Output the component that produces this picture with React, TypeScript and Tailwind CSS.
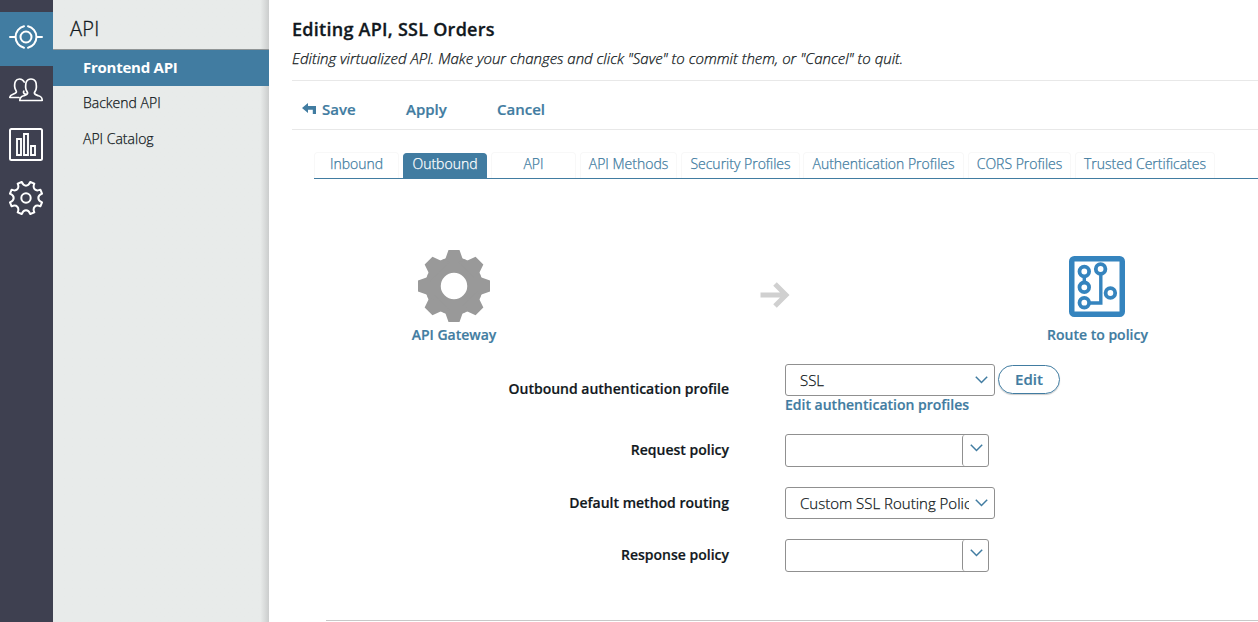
import React from "react";

const BLUE = "#417ca1";

function TargetIcon() {
  return (
    <svg width="34" height="24" viewBox="0 0 34 24" fill="none" stroke="#fff" strokeWidth="2" strokeLinecap="round">
      <circle cx="17" cy="12" r="5.500" />
      <path d="M19 1.300a11 11 0 0 1 0 21.400M15 22.700a11 11 0 0 1 0-21.400M1 12h5M28 12h5" />
    </svg>
  );
}

function UsersIcon() {
  return (
    <svg width="34" height="24" viewBox="0 0 34 24" fill="none" stroke="#fff" strokeWidth="1.7" strokeLinejoin="round" strokeLinecap="round">
      <path d="M10.8 22.500c0-3.200 1.200-4 3.800-4.700 2.600-.9 4-1.300 4-2.800 0-1.200-1.700-2.200-1.900-5C16.300 4.500 17.500 1 22 1s5.700 3.500 5.300 9c-.2 2.800-1.900 3.800-1.900 5 0 1.500 1.400 1.900 4 2.800 2.600.8 3.800 1.500 3.800 4.700z" />
      <path d="M15.200 4C14.300 2 12.700 1 10.500 1 6.500 1 5.300 4.500 5.700 8.800c.2 2.700 1.700 3.700 1.700 5 0 1.200-1.400 1.700-3.400 2.400-2.200.8-3.200 1.200-3.200 3.300h9.200M14.800 13.200c-.9 1.900.5 2.600 1.700 3.100" />
    </svg>
  );
}

function ChartIcon() {
  return (
    <svg width="34" height="33" viewBox="0 0 34 33" fill="none" stroke="#fff" strokeWidth="2">
      <rect x="1" y="1" width="32" height="31" rx="1.500" />
      <path strokeWidth="1.900" d="M8 11h4v16H8zM15 6h4v21h-4zM22 18h4v9h-4z" />
    </svg>
  );
}

function polar(radius: number, degrees: number) {
  const t = (degrees * Math.PI) / 180;
  return `${(17 + radius * Math.cos(t)).toFixed(2)} ${(17 + radius * Math.sin(t)).toFixed(2)}`;
}

function cogOutline() {
  let d = `M${polar(16.6, 15)}`;
  for (let i = 0; i < 8; i++) {
    const a = 22.5 + i * 45;
    d += `L${polar(16.6, a + 7.5)}C${polar(11.3, a + 11)} ${polar(11.3, a + 34)} ${polar(16.6, a + 37.5)}`;
  }
  return d + "Z";
}

function SettingsIcon() {
  return (
    <svg width="34" height="34" viewBox="0 0 34 34" fill="none" stroke="#fff" strokeWidth="2" strokeLinejoin="round">
      <circle cx="17" cy="17" r="4.700" />
      <path d={cogOutline()} />
    </svg>
  );
}

function GatewayIcon() {
  const teeth = [0, 45, 90, 135, 180, 225, 270, 315];
  return (
    <svg width="72" height="72" viewBox="0 0 72 72">
      <circle cx="36" cy="36" r="21" fill="none" stroke="#999" strokeWidth="15.500" />
      {teeth.map((a) => (
        <path key={a} d="M30.500 0h11l3 8.500L50 16H22l5.500-7.500z" fill="#999" transform={`rotate(${a} 36 36)`} />
      ))}
    </svg>
  );
}

function PolicyIcon() {
  return (
    <svg width="56" height="61" viewBox="0 0 56 61" fill="none" stroke="#3584be">
      <rect x="2.750" y="2.750" width="50.500" height="55.500" rx="2.500" strokeWidth="5.500" />
      <g strokeWidth="3.800">
        <circle cx="15.300" cy="15.500" r="4.800" />
        <circle cx="15.300" cy="31.300" r="4.800" />
        <circle cx="15.300" cy="46.700" r="4.800" />
        <circle cx="31.600" cy="13" r="4.800" />
        <circle cx="41.400" cy="37" r="4.800" />
      </g>
      <path strokeWidth="3.400" d="M15.300 20v7.500M20 47h11.800V18" />
    </svg>
  );
}

function Chevron() {
  return (
    <svg className="shrink-0" width="13" height="8" viewBox="0 0 13 8" fill="none" stroke={BLUE} strokeWidth="1.500">
      <path d="M.8.8 6.500 6.500 12.200.8" />
    </svg>
  );
}

function Select({ value }: { value: string }) {
  return (
    <div className="flex h-8 w-[210px] items-center rounded-[3px] border border-[#909090] bg-white pr-[6px] pl-[14px] text-[15px] font-light [-webkit-text-stroke:0.25px]">
      <span className="w-[169px] overflow-hidden whitespace-nowrap">{value}</span>
      <span className="ml-auto"><Chevron /></span>
    </div>
  );
}

function Combo() {
  return (
    <div className="flex h-[33px] w-[204px] rounded-[3px] border border-[#909090] bg-white">
      <div className="flex-1" />
      <div className="flex w-[26px] justify-end rounded-[3px] border-l border-[#909090] pt-[9px] pr-[5px]"><Chevron /></div>
    </div>
  );
}

function Label({ children }: { children: string }) {
  return <div className="w-[460px] text-right text-[14px] leading-5 font-semibold [-webkit-text-stroke:0.2px]">{children}</div>;
}

const tabs = [
  { name: "Inbound", box: "ml-0 w-[85px]" },
  { name: "Outbound", box: "ml-[4px] w-[84px]" },
  { name: "API", box: "ml-[4px] w-[85px]" },
  { name: "API Methods", box: "ml-[4px] w-[97px]" },
  { name: "Security Profiles", box: "ml-[4px] w-[119px]" },
  { name: "Authentication Profiles", box: "ml-[3px] w-[161px]" },
  { name: "CORS Profiles", box: "ml-[4px] w-[103px]" },
  { name: "Trusted Certificates", box: "ml-[4px] w-[140px]" },
];

export default function App() {
  return (
    <div className="flex h-[622px] w-[1258px] overflow-hidden bg-white font-['Open_Sans','Liberation_Sans',sans-serif] text-[#111820]">
      <nav className="flex w-[53px] shrink-0 flex-col items-center bg-[#3e4050] pt-3 pr-px">
        <div className="-mr-px flex h-[54px] w-[53px] items-center justify-center bg-[#417ca1] pr-px pb-1"><TargetIcon /></div>
        <div className="mt-[12px] h-6"><UsersIcon /></div>
        <div className="mt-[26px] h-[33px]"><ChartIcon /></div>
        <div className="mt-[20px]"><SettingsIcon /></div>
      </nav>

      <aside className="w-[216px] shrink-0 bg-gradient-to-r from-[#e8ebea] from-96% to-[#cbcdcd] text-[14px]">
        <div className="flex h-[50px] items-center border-b border-[#909596] pt-[9px] pl-[17px] text-[20px] font-light tracking-[0.3px] [-webkit-text-stroke:0.3px]">API</div>
        <div className="flex h-9 items-center bg-[#417ca1] pb-[2px] pl-[30px] text-[15px] font-bold tracking-[-0.25px] text-white">Frontend API</div>
        <div className="flex h-9 items-center pb-[4px] pl-[30px] font-light [-webkit-text-stroke:0.25px]">Backend API</div>
        <div className="flex h-9 items-center pb-[4px] pl-[30px] font-light [-webkit-text-stroke:0.25px]">API Catalog</div>
      </aside>

      <main className="flex min-w-0 flex-1 flex-col">
        <header className="ml-[23px] h-[81px] border-b border-[#e8e8e8] pt-[16px]">
          <h1 className="text-[18px] leading-[26px] font-semibold tracking-[0.26px] [-webkit-text-stroke:0.3px]">Editing API, SSL Orders</h1>
          <p className="mt-[5px] text-[15px] leading-[22px] font-light whitespace-nowrap italic [-webkit-text-stroke:0.25px]">Editing virtualized API. Make your changes and click "Save" to commit them, or "Cancel" to quit.</p>
        </header>
        <div className="ml-[23px] flex h-[49px] items-center border-b border-[#e8e8e8] pt-[8px] pl-[10px] text-[15px] font-semibold text-[#417ca1] [-webkit-text-stroke:0.2px]">
          <svg className="-mt-px" width="14" height="11" viewBox="0 0 14 11" fill={BLUE}><path d="M0 5 6 0v3h8v8h-3.200V6.700H6V10z" /></svg>
          <span className="ml-[6px] w-[84px]">Save</span>
          <span className="w-[91px]">Apply</span>
          <span>Cancel</span>
        </div>
        <div className="mt-[22px] ml-[45px] flex h-[27px] shrink-0 border-b border-[#417ca1] text-[14px] font-light [-webkit-text-stroke:0.25px]">
          {tabs.map((t) => (
            <div
              key={t.name}
              className={
                "flex shrink-0 justify-center rounded-t-[4px] border border-b-0 whitespace-nowrap " + t.box +
                (t.name === "Outbound" ? " mt-px border-[#417ca1] bg-[#417ca1] leading-[20px] text-white" : " border-[#f8f8f8] leading-[22px] text-[#417ca1]")
              }
            >
              {t.name}
            </div>
          ))}
        </div>

        <section className="mt-[71px] flex h-[96px] shrink-0 text-[14px] leading-5 font-semibold text-[#417ca1] [-webkit-text-stroke:0.2px]">
          <div className="ml-[125px] flex w-[120px] flex-col items-center">
            <GatewayIcon />
            <span className="mt-[3px]">API Gateway</span>
          </div>
          <svg className="mt-[32px] ml-[246px]" width="30" height="26" viewBox="0 0 30 26" fill="none" stroke="#d0d0d0" strokeWidth="5">
            <path d="M.5 13H26M15 2l11 11-11 11" />
          </svg>
          <div className="ml-[247px] flex w-[120px] flex-col items-center pt-[6px]">
            <PolicyIcon />
            <span className="mt-[8px] ml-px whitespace-nowrap">Route to policy</span>
          </div>
        </section>

        <section className="mt-[18px]">
          <div className="flex h-[70px]">
            <div className="pt-[15px]"><Label>Outbound authentication profile</Label></div>
            <div className="ml-[56px]">
              <div className="flex gap-[3px]">
                <Select value="SSL" />
                <button className="mt-px h-[29px] w-[62px] rounded-full border border-[#417ca1] pb-px text-[15px] font-semibold text-[#417ca1] shadow-[0_1px_1px_#ccc] [-webkit-text-stroke:0.2px]">Edit</button>
              </div>
              <div className="text-[14px] leading-[18px] font-semibold text-[#417ca1] [-webkit-text-stroke:0.2px]">Edit authentication profiles</div>
            </div>
          </div>
          <div className="flex h-[53px]">
            <div className="pt-[6px]"><Label>Request policy</Label></div>
            <div className="ml-[56px]"><Combo /></div>
          </div>
          <div className="flex h-[52px]">
            <div className="pt-[6px]"><Label>Default method routing</Label></div>
            <div className="ml-[56px]"><Select value="Custom SSL Routing Policy" /></div>
          </div>
          <div className="flex h-[81px]">
            <div className="pt-[6px]"><Label>Response policy</Label></div>
            <div className="ml-[56px]"><Combo /></div>
          </div>
          <div className="ml-[57px] border-t border-[#c8c8c8]" />
        </section>
      </main>
    </div>
  );
}
